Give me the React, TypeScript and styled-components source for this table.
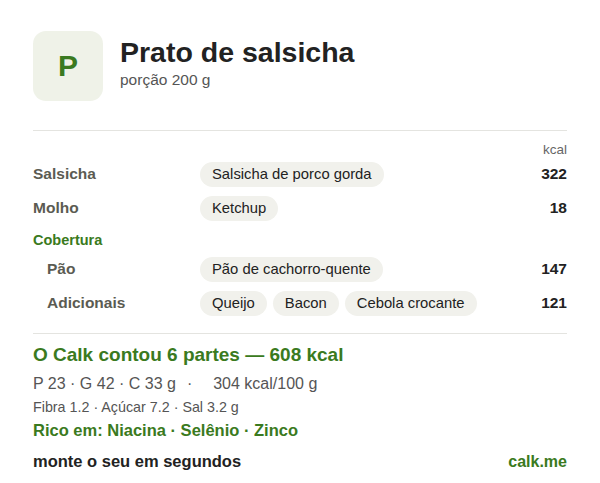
import styled, { createGlobalStyle } from 'styled-components'

const GlobalStyle = createGlobalStyle`
  html, body {
    margin: 0;
    padding: 0;
    background: #ffffff;
    font-family: "Liberation Sans", Arial, sans-serif;
    color: #222;
  }
`

const green = '#3a7a20'

interface Row {
  label: string;
  chips: string[];
  kcal: number;
  indent?: boolean;
}

const rows: Row[] = [
  { label: 'Salsicha', chips: ['Salsicha de porco gorda'], kcal: 322 },
  { label: 'Molho', chips: ['Ketchup'], kcal: 18 },
]

const groupRows: Row[] = [
  { label: 'Pão', chips: ['Pão de cachorro-quente'], kcal: 147, indent: true },
  { label: 'Adicionais', chips: ['Queijo', 'Bacon', 'Cebola crocante'], kcal: 121, indent: true },
]

const Card = styled.div`
  width: 534px;
  padding: 31px 33px 0 33px;
`

const Header = styled.div`
  display: flex;
  align-items: center;
  gap: 17px;
  padding-bottom: 29px;
  border-bottom: 1px solid #e4e4e0;
`

const Avatar = styled.div`
  width: 70px;
  height: 70px;
  border-radius: 13px;
  background: #eff2e8;
  color: ${green};
  font-size: 30px;
  font-weight: 700;
  display: flex;
  align-items: center;
  justify-content: center;
`

const Titles = styled.div`
  display: flex;
  flex-direction: column;
  gap: 3px;
  margin-top: -7px;
`

const Title = styled.h1`
  margin: 0;
  font-size: 28.5px;
  font-weight: 700;
  color: #222;
  line-height: 32px;
`

const Sub = styled.div`
  font-size: 15.5px;
  color: #555;
`

const Table = styled.div`
  display: grid;
  grid-template-columns: 167px 1fr auto;
  align-items: center;
  padding-top: 11px;
  padding-bottom: 13px;
  border-bottom: 1px solid #e4e4e0;
`

const KcalHead = styled.div`
  grid-column: 3;
  font-size: 13.5px;
  color: #666;
  text-align: right;
`

const Label = styled.div<{ $indent?: boolean }>`
  grid-column: 1;
  font-size: 15.5px;
  font-weight: 700;
  color: #5b5b52;
  padding-left: ${(p) => (p.$indent ? '14px' : '0')};
  height: 34px;
  line-height: 34px;
`

const Chips = styled.div`
  display: flex;
  gap: 6px;
`

const Chip = styled.span`
  background: #f1f1ec;
  border-radius: 13px;
  padding: 0 12px;
  height: 25px;
  line-height: 25px;
  font-size: 14.8px;
  color: #222;
`

const Kcal = styled.div`
  font-size: 15.5px;
  font-weight: 700;
  color: #222;
  text-align: right;
`

const GroupTitle = styled.div`
  grid-column: 1 / 4;
  font-size: 14.5px;
  font-weight: 700;
  color: ${green};
  line-height: 30px;
  margin-top: 0;
  margin-bottom: -3px;
`

const Summary = styled.div`
  padding-top: 9px;
  display: flex;
  flex-direction: column;
`

const Total = styled.div`
  font-size: 19px;
  font-weight: 700;
  color: ${green};
  line-height: 24px;
`

const Macros = styled.div`
  font-size: 16px;
  color: #555;
  margin-top: 7px;
  line-height: 20px;
`

const Sep = styled.span`
  margin: 0 21px 0 11px;
`

const Minor = styled.div`
  font-size: 14.3px;
  color: #555;
  margin-top: 4px;
  line-height: 18px;
`

const Rich = styled.div`
  font-size: 16.5px;
  font-weight: 700;
  color: ${green};
  margin-top: 4px;
  line-height: 20px;
`

const Footer = styled.div`
  display: flex;
  justify-content: space-between;
  align-items: baseline;
  margin-top: 10px;
  line-height: 22px;
`

const Cta = styled.div`
  font-size: 16.5px;
  font-weight: 700;
  color: #222;
`

const Link = styled.div`
  font-size: 16px;
  font-weight: 700;
  color: ${green};
`

const renderRow = (r: Row) => (
  <>
    <Label $indent={r.indent}>{r.label}</Label>
    <Chips>
      {r.chips.map((c) => (
        <Chip key={c}>{c}</Chip>
      ))}
    </Chips>
    <Kcal>{r.kcal}</Kcal>
  </>
)

export default function App() {
  return (
    <>
      <GlobalStyle />
      <Card>
        <Header>
          <Avatar>P</Avatar>
          <Titles>
            <Title>Prato de salsicha</Title>
            <Sub>porção 200 g</Sub>
          </Titles>
        </Header>
        <Table>
          <KcalHead>kcal</KcalHead>
          {rows.map(renderRow)}
          <GroupTitle>Cobertura</GroupTitle>
          {groupRows.map(renderRow)}
        </Table>
        <Summary>
          <Total>O Calk contou 6 partes — 608 kcal</Total>
          <Macros>
            P 23 · G 42 · C 33 g<Sep>·</Sep>304 kcal/100 g
          </Macros>
          <Minor>Fibra 1.2 · Açúcar 7.2 · Sal 3.2 g</Minor>
          <Rich>Rico em: Niacina · Selênio · Zinco</Rich>
          <Footer>
            <Cta>monte o seu em segundos</Cta>
            <Link>calk.me</Link>
          </Footer>
        </Summary>
      </Card>
    </>
  )
}
